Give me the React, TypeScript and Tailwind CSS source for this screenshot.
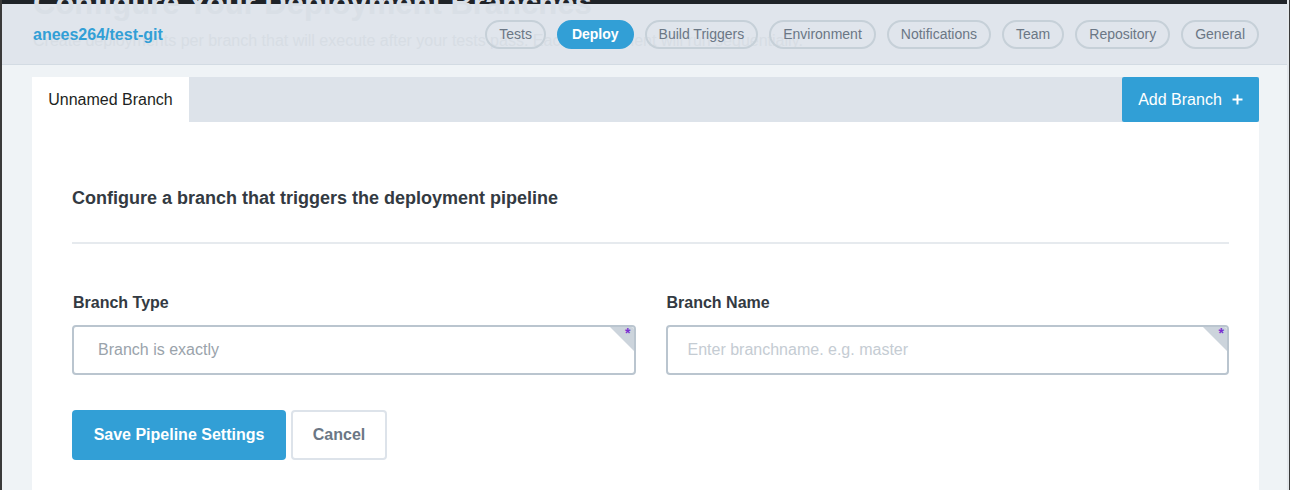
import React from "react";

const pills = ["Tests", "Deploy", "Build Triggers", "Environment", "Notifications", "Team", "Repository", "General"];

function Corner() {
  return (
    <div className="absolute top-0 right-0 w-[24px] h-[24px] overflow-hidden rounded-tr-[3px]">
      <div className="absolute top-0 right-0 w-0 h-0 border-t-[24px] border-t-[#ccd4dc] border-l-[24px] border-l-transparent" />
      <span className="absolute top-[-1px] right-[3px] text-[14px] font-bold leading-[14px] text-[#7a2fd1]">*</span>
    </div>
  );
}

export default function App() {
  return (
    <div
      className="w-[1290px] h-[490px] flex overflow-hidden bg-[#eff3f6]"
      style={{ fontFamily: '"Liberation Sans", Arial, sans-serif' }}
    >
      <div className="w-[2px] shrink-0 bg-[#3a3a3a]" />
      <div className="flex-1 flex flex-col min-w-0">
        <div className="h-[4px] shrink-0 bg-[#1f2328]" />
        <header className="relative h-[61px] shrink-0 bg-[#e0e5ec] border-b border-[#d3dbe3] flex items-center px-[31px]">
          <div className="absolute left-[31px] top-[-18px] pointer-events-none select-none">
            <div className="text-[31px] font-bold leading-[36px] text-[#d9dfe6] whitespace-nowrap">
              Configure Your Deployment Branches
            </div>
            <div className="mt-[9px] text-[16px] leading-[20px] text-[#d7dde4] whitespace-nowrap">
              Create deployments per branch that will execute after your tests pass. Each deployment will run sequentially.
            </div>
          </div>
          <div className="relative text-[16px] font-bold text-[#329fd6] mt-[1px]">anees264/test-git</div>
          <nav className="relative ml-auto flex items-center gap-[11px] mr-[-3px]">
            {pills.map((p) =>
              p === "Deploy" ? (
                <span
                  key={p}
                  className="h-[29px] px-[13px] flex items-center rounded-full bg-[#329fd6] border-2 border-[#329fd6] text-white font-bold text-[14px]"
                >
                  {p}
                </span>
              ) : (
                <span
                  key={p}
                  className="h-[29px] px-[12px] flex items-center rounded-full border-2 border-[#c6d0d8] text-[#6b7785] text-[14px]"
                >
                  {p}
                </span>
              )
            )}
          </nav>
        </header>
        <main className="flex-1 pl-[30px] pr-[28px] pt-[12px]">
          <div className="flex flex-col h-full">
            <div className="flex h-[45px] bg-[#dde3ea]">
              <div className="w-[157px] bg-white flex items-center justify-center text-[16px] text-[#1d1f22]">
                Unnamed Branch
              </div>
              <div className="flex-1" />
              <button className="w-[137px] bg-[#319fd6] rounded-[2px] text-white text-[16px] flex items-center justify-center gap-[10px]">
                Add Branch
                <svg width="11" height="11" viewBox="0 0 11 11">
                  <path d="M5.5 0.5v10M0.5 5.5h10" stroke="white" strokeWidth="2" />
                </svg>
              </button>
            </div>
            <div className="flex-1 bg-white pl-[40px] pr-[30px] pt-[64px]">
              <h2 className="text-[18px] font-bold leading-[24px] text-[#333a42]">
                Configure a branch that triggers the deployment pipeline
              </h2>
              <div className="mt-[32px] h-[2px] bg-[#e6eaee]" />
              <div className="mt-[50px] grid grid-cols-2 gap-[30px]">
                <div>
                  <div className="text-[16px] font-bold leading-[18px] text-[#333a42] pl-[1px]">Branch Type</div>
                  <div className="relative mt-[13px] h-[50px] border-2 border-[#bac5cf] rounded-[4px] flex items-center pl-[24px] text-[16px] text-[#9aa3ab]">
                    Branch is exactly
                    <Corner />
                  </div>
                </div>
                <div>
                  <div className="text-[16px] font-bold leading-[18px] text-[#333a42] pl-[1px]">Branch Name</div>
                  <div className="relative mt-[13px] h-[50px] border-2 border-[#bac5cf] rounded-[4px] flex items-center pl-[20px] text-[16px] text-[#c5ccd3]">
                    Enter branchname. e.g. master
                    <Corner />
                  </div>
                </div>
              </div>
              <div className="mt-[35px] flex gap-[5px]">
                <button className="w-[214px] h-[50px] rounded-[4px] bg-[#329fd6] text-white font-bold text-[16px]">
                  Save Pipeline Settings
                </button>
                <button className="w-[96px] h-[50px] rounded-[4px] bg-white border-2 border-[#dde3ea] text-[#6b7785] font-bold text-[16px]">
                  Cancel
                </button>
              </div>
            </div>
          </div>
        </main>
      </div>
      <div className="w-[2px] shrink-0 bg-[#e4e8ec]" />
      <div className="w-[1px] shrink-0 bg-[#3a3a3a]" />
    </div>
  );
}
